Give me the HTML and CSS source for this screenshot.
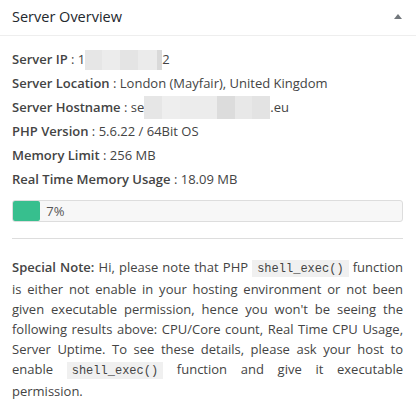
FILE: index.html
```html
<!DOCTYPE html>
<html>
<head>
<meta charset="utf-8">
<link rel="stylesheet" href="styles.css">
</head>
<body>
<div class="widget">
  <div class="widget-head">
    <h2>Server Overview</h2>
    <span class="toggle"></span>
  </div>
  <div class="widget-body">
    <ul class="info">
      <li><b>Server IP</b> : 1<span class="blur ip"><i class="c1"></i><i class="c2"></i><i class="c3"></i><i class="c4"></i><i class="c5"></i></span>2</li>
      <li><b>Server Location</b> : London (Mayfair), United Kingdom</li>
      <li><b>Server Hostname</b> : se<span class="blur host"><i class="h1"></i><i class="h2"></i><i class="h3"></i><i class="h4"></i><i class="h5"></i><i class="h6"></i></span>.eu</li>
      <li><b>PHP Version</b> : 5.6.22 / 64Bit OS</li>
      <li><b>Memory Limit</b> : 256 MB</li>
      <li><b>Real Time Memory Usage</b> : 18.09 MB</li>
    </ul>
    <div class="progress">
      <div class="fill" style="width:7%"></div>
      <span class="pct">7%</span>
    </div>
    <hr class="sep">
    <p class="note"><b>Special Note:</b> Hi, please note that PHP <code>shell_exec()</code> function is either not enable in your hosting environment or not been given executable permission, hence you won't be seeing the following results above: CPU/Core count, Real Time CPU Usage, Server Uptime. To see these details, please ask your host to enable <code>shell_exec()</code> function and give it executable permission.</p>
  </div>
</div>
</body>
</html>
```

FILE: styles.css
```css
* { box-sizing: border-box; }
html, body {
  margin: 0;
  padding: 0;
  background: #fff;
}
body {
  font-family: "Open Sans", "Noto Sans", sans-serif;
  font-size: 13px;
  color: #444;
}
.widget {
  width: 416px;
}
.widget-head {
  display: flex;
  align-items: center;
  justify-content: space-between;
  height: 36px;
  padding: 0 14px 0 12px;
  border-bottom: 1px solid #eee;
}
.widget-head h2 {
  margin: 0;
  font-size: 14.5px;
  font-weight: 400;
  color: #23282d;
  line-height: 1;
  padding-bottom: 1px;
}
.toggle {
  width: 0;
  height: 0;
  border-left: 4px solid transparent;
  border-right: 4px solid transparent;
  border-bottom: 5px solid #72777c;
  margin-bottom: 2px;
}
.widget-body {
  padding: 11px 13px 12px 12px;
}
.info {
  list-style: none;
  margin: 0;
  padding: 0;
}
.info li {
  line-height: 24px;
  height: 24px;
  white-space: nowrap;
}
.info b {
  font-weight: 600;
}
.blur {
  display: inline-flex;
  vertical-align: middle;
  height: 20px;
  margin-top: -2px;
}
.blur i {
  display: block;
  height: 100%;
}
.ip { width: 77px; }
.ip .c1 { width: 17px; background: #e6e6e6; }
.ip .c2 { width: 18px; background: #ececec; }
.ip .c3 { width: 18px; background: #e4e4e4; }
.ip .c4 { width: 19px; background: #ebebeb; }
.ip .c5 { width: 5px; background: #d9d9d9; }
.host { width: 126px; height: 23px; }
.host .h1 { width: 18px; background: #e6e6e6; }
.host .h2 { width: 18px; background: #eeeeee; }
.host .h3 { width: 37px; background: #ececec; }
.host .h4 { width: 18px; background: #dcdcdc; }
.host .h5 { width: 17px; background: #e8e8e8; }
.host .h6 { width: 18px; background: #e3e3e3; }
.progress {
  display: flex;
  align-items: center;
  margin-top: 9px;
  height: 22px;
  border: 1px solid #ddd;
  border-radius: 3px;
  background: #f7f7f7;
}
.fill {
  height: 100%;
  background: #37bf8e;
  border-radius: 2px;
}
.pct {
  margin-left: 6px;
  color: #555;
  font-size: 13px;
}
.sep {
  margin: 16px 0 0;
  border: 0;
  border-top: 1px solid #ddd;
  height: 0;
}
.note {
  margin: 18px 0 0;
  line-height: 20px;
  text-align: justify;
}
.note b {
  font-weight: 600;
}
code {
  font-family: "Liberation Mono", "DejaVu Sans Mono", monospace;
  font-size: 12px;
  background: #f0f0f0;
  padding: 2px 5px 1px;
}
```
